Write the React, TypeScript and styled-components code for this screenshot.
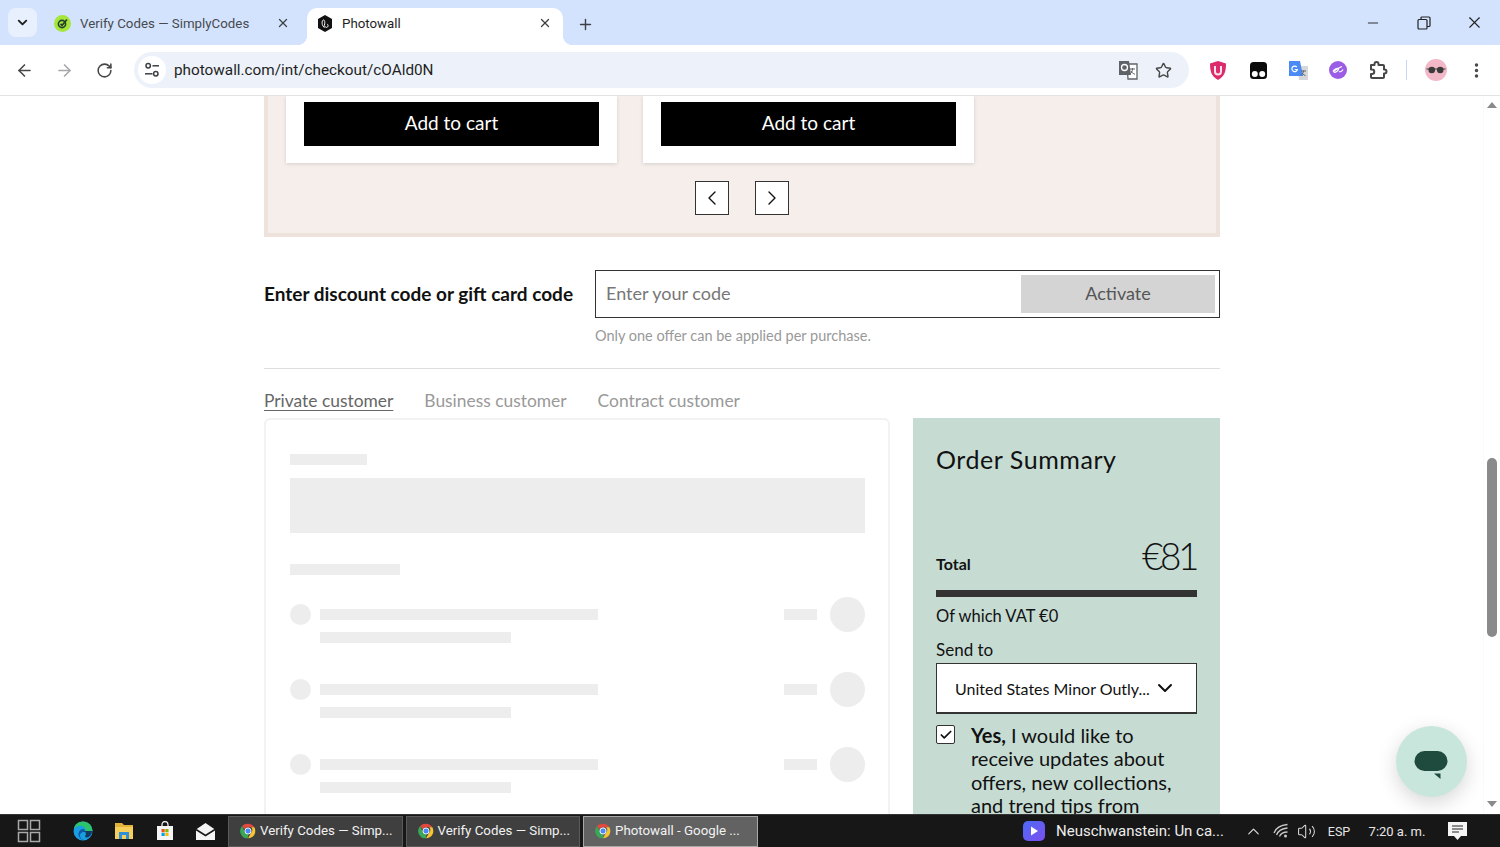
import React from "react";
import styled, { createGlobalStyle } from "styled-components";
import {
  ArrowLeft,
  ArrowRight,
  Check,
  ChevronDown,
  ChevronLeft,
  ChevronRight,
  ChevronUp,
  EllipsisVertical,
  Minus,
  Plus,
  RotateCw,
  Star,
  Volume2,
  X,
} from "lucide-react";

const GlobalStyle = createGlobalStyle`
  html, body {
    margin: 0;
    padding: 0;
    height: 100%;
    overflow: hidden;
    background: #fff;
  }
  * {
    box-sizing: border-box;
  }
`;

const pageFont = `"Lato", "Open Sans", sans-serif`;
const chromeFont = `"Roboto", "Liberation Sans", sans-serif`;

function ChromeLogo({ size = 16 }: { size?: number }) {
  return (
    <svg width={size} height={size} viewBox="0 0 24 24">
      <path d="M12 1a11 11 0 0 1 9.5 5.5H12a5.5 5.5 0 0 0-5 3.2L3.2 4.6A11 11 0 0 1 12 1z" fill="#e2483d" />
      <path d="M21.5 6.5A11 11 0 0 1 12 23l4.7-8.2a5.5 5.5 0 0 0 0-8.3z" fill="#f7c531" />
      <path d="M12 23A11 11 0 0 1 3.2 4.6L7.8 14.8a5.5 5.5 0 0 0 4.6 2.7z" fill="#3aa757" />
      <circle cx="12" cy="12" r="4.6" fill="#4a8af4" stroke="#fff" strokeWidth="1.4" />
    </svg>
  );
}

function SimplyCodesIcon() {
  return (
    <svg width="17" height="17" viewBox="0 0 17 17">
      <circle cx="8.5" cy="8.5" r="8.5" fill="#a4e639" />
      <circle cx="8" cy="9" r="3.6" fill="none" stroke="#24402a" strokeWidth="1.6" />
      <path d="M6.5 9l1.6 1.4L13 4.5" fill="none" stroke="#24402a" strokeWidth="1.7" />
    </svg>
  );
}

function PhotowallIcon() {
  return (
    <svg width="16" height="17" viewBox="0 0 16 17">
      <path d="M8 0l7 4v9l-7 4-7-4V4z" fill="#111" />
      <path
        d="M7 12c-2.2-1-2.6-6.500-.6-7 1.800-.4 1.800 4.500.4 6.500-.4.800.9 1.100 1.400.1.200 1.200 2.400 1.100 2.800-.4.300-1.200-.4-2-.9-2"
        fill="none"
        stroke="#fff"
        strokeWidth="1"
      />
    </svg>
  );
}

function TuneIcon() {
  return (
    <svg width="16" height="16" viewBox="0 0 16 16" fill="none" stroke="#3c4043" strokeWidth="1.5">
      <circle cx="4.2" cy="3.8" r="2.2" />
      <path d="M8.500 3.800H15" />
      <circle cx="11.800" cy="11.800" r="2.200" />
      <path d="M1 11.800h7.500" />
    </svg>
  );
}

function TranslatePageIcon() {
  return (
    <svg width="20" height="20" viewBox="0 0 20 20">
      <path d="M9 4h10v15H10z" fill="#fff" stroke="#5f6368" strokeWidth="1.300" />
      <path d="M1 1h10l2 14H1z" fill="#5f6368" />
      <circle cx="6.500" cy="7.500" r="3" fill="none" stroke="#fff" strokeWidth="1.300" />
      <path d="M12 9h5M14.500 8v1c0 2-1 4-2.500 5M13 11c.8 1.500 2.400 2.800 4 3.300" fill="none" stroke="#5f6368" strokeWidth="1" />
    </svg>
  );
}

function ShieldIcon() {
  return (
    <svg width="16" height="19" viewBox="0 0 16 19">
      <path d="M8 0l8 2.500c0 8-1.500 13-8 16.500C1.500 15.500 0 10.500 0 2.500z" fill="#dc2a6c" />
      <path d="M5 5v5.500a3 3 0 0 0 6 0V5" fill="none" stroke="#fbe3ec" strokeWidth="2" />
    </svg>
  );
}

function TamperIcon() {
  return (
    <svg width="17" height="17" viewBox="0 0 17 17">
      <rect width="17" height="17" rx="3.500" fill="#0b0b0b" />
      <circle cx="4.800" cy="12" r="3" fill="#fff" />
      <circle cx="12.200" cy="12" r="3" fill="#fff" />
    </svg>
  );
}

function GoogleTranslateIcon() {
  return (
    <svg width="19" height="19" viewBox="0 0 19 19">
      <path d="M8 5h11v14H10z" fill="#d5d7da" />
      <path d="M0 0h11l3 15H0z" fill="#4a8af4" />
      <path d="M7.800 6a2.800 2.800 0 1 0 .6 2.500H5.600" fill="none" stroke="#fff" strokeWidth="1.200" />
      <path d="M12 10h5M14.500 9.500c0 2-1 3.800-2.500 5M13 12c.8 1.200 2 2.200 3.500 2.700" fill="none" stroke="#5f6368" strokeWidth="1" />
    </svg>
  );
}

function PurpleIcon() {
  return (
    <svg width="18" height="18" viewBox="0 0 18 18">
      <circle cx="9" cy="9" r="9" fill="#9b5de5" />
      <path d="M4 10.500c1-2.500 5-4 5.500-2.500s-3.500 4-4.500 3 3-3 8-5.500M10 10.500c1 .5 3 0 4-2" fill="none" stroke="#fff" strokeWidth="1.300" />
    </svg>
  );
}

function ExtensionsIcon() {
  return (
    <svg width="20" height="20" viewBox="0 0 20 20" fill="none" stroke="#474747" strokeWidth="2" strokeLinejoin="round">
      <path d="M3 5h3.500V4a2 2 0 0 1 4 0v1H15a1 1 0 0 1 1 1v3.500h.5a2 2 0 0 1 0 4H16V17a1 1 0 0 1-1 1H4a1 1 0 0 1-1-1v-3h1a2.200 2.200 0 0 0 0-4.500H3z" />
    </svg>
  );
}

function AvatarIcon() {
  return (
    <svg width="22" height="22" viewBox="0 0 22 22">
      <circle cx="11" cy="11" r="11" fill="#f3b8c8" />
      <circle cx="6.800" cy="11" r="3.300" fill="#3b3b3b" />
      <circle cx="15.200" cy="11" r="3.300" fill="#3b3b3b" />
      <path d="M1.500 10h19" stroke="#3b3b3b" strokeWidth="1" />
    </svg>
  );
}

function RestoreIcon() {
  return (
    <svg width="14" height="14" viewBox="0 0 14 14" fill="none" stroke="#222" strokeWidth="1.200">
      <rect x="1" y="3.500" width="9" height="9.500" rx="1" />
      <path d="M4 3.500V2a1 1 0 0 1 1-1h7a1 1 0 0 1 1 1v7.500a1 1 0 0 1-1 1h-2" />
    </svg>
  );
}

function StartIcon() {
  return (
    <svg width="24" height="24" viewBox="0 0 24 24" fill="none" stroke="#a9a9a9" strokeWidth="1.500">
      <rect x="1.500" y="1.500" width="9" height="9" />
      <rect x="13.500" y="1.500" width="9" height="9" />
      <rect x="1.500" y="13.500" width="9" height="9" />
      <rect x="13.500" y="13.500" width="9" height="9" />
    </svg>
  );
}

function EdgeIcon() {
  return (
    <svg width="20" height="20" viewBox="0 0 20 20">
      <circle cx="10" cy="10" r="9.500" fill="#1b9de2" />
      <path d="M19.500 10c0-5-4-9.500-9.500-9.500C5 .5 1.500 4 .8 8c2-3 8-4.500 10.700-1.500 1 1 1.200 2.500.3 3.500h7.700z" fill="#2dc36a" />
      <path d="M12 11c-3-.5-5 1-5 3.500s2.500 5 6 5c-4 .5-8-3-7.500-7 .500-4 5-6 6.500-3.500z" fill="#0c59a4" />
      <path d="M11.800 10H19c0 3-2 6-5 6.500-2 .3-2.500-1-1.500-2 .7-1 .3-3-.7-4.500z" fill="#0f2f57" opacity=".9" />
    </svg>
  );
}

function FolderIcon() {
  return (
    <svg width="20" height="18" viewBox="0 0 20 18">
      <path d="M1 1h7l2 2h9v4H1z" fill="#e3b23c" />
      <rect x="1" y="5" width="18" height="12" fill="#f6cf5b" />
      <rect x="5" y="10" width="10" height="7" fill="#2f8fd8" />
      <rect x="8" y="13" width="4" height="4" fill="#f6cf5b" />
    </svg>
  );
}

function StoreIcon() {
  return (
    <svg width="18" height="20" viewBox="0 0 18 20">
      <path d="M6 5V3.500a3 3 0 0 1 6 0V5" fill="none" stroke="#eee" strokeWidth="1.300" />
      <rect x="1" y="5" width="16" height="14" fill="#f5f5f5" />
      <rect x="5.500" y="8" width="3.200" height="3.200" fill="#f25022" />
      <rect x="9.300" y="8" width="3.200" height="3.200" fill="#7fba00" />
      <rect x="5.500" y="11.800" width="3.200" height="3.200" fill="#00a4ef" />
      <rect x="9.300" y="11.800" width="3.200" height="3.200" fill="#ffb900" />
    </svg>
  );
}

function MailIcon() {
  return (
    <svg width="19" height="17" viewBox="0 0 19 17">
      <path d="M0 6.500L9.500 0 19 6.500V17H0z" fill="#f5f5f5" />
      <path d="M0 6.500l9.500 6 9.500-6" fill="none" stroke="#1a1a1a" strokeWidth="1.600" />
    </svg>
  );
}

function PlayerIcon() {
  return (
    <svg width="22" height="20" viewBox="0 0 22 20">
      <defs>
        <linearGradient id="playerBg" x1="0" y1="0" x2="1" y2="1">
          <stop offset="0" stopColor="#4b6bf5" />
          <stop offset="1" stopColor="#7d4ff0" />
        </linearGradient>
      </defs>
      <rect width="22" height="20" rx="5" fill="url(#playerBg)" />
      <path d="M8 5.500l7 4.500-7 4.500z" fill="#fff" />
    </svg>
  );
}

function WifiIcon() {
  return (
    <svg width="16" height="16" viewBox="0 0 16 16" fill="none" stroke="#c9c9c9" strokeWidth="1.300">
      <path d="M1 10C3 4.500 8 2 14.500 1.500M3.500 12C5 8 9 5.500 14.500 5M6.500 13.500c1-2.500 4-4.500 8-4.500" />
      <circle cx="12.500" cy="13" r="1.500" fill="#c9c9c9" stroke="none" />
    </svg>
  );
}

function NotificationIcon() {
  return (
    <svg width="19" height="18" viewBox="0 0 19 18">
      <path d="M0 0h19v14h-6l-3.500 4L6 14H0z" fill="#f5f5f5" />
      <path d="M4 4h11M4 7h11M4 10h7" stroke="#222" strokeWidth="1.200" />
    </svg>
  );
}

function ChatBubble() {
  return (
    <svg width="34" height="28" viewBox="0 0 34 28">
      <rect x="0.500" width="33" height="20" rx="10" fill="#1f4a3e" />
      <path d="M20 22.500h6.500v5.500z" fill="#1f4a3e" />
    </svg>
  );
}

const tabs = [
  { title: "Verify Codes — SimplyCodes", icon: <SimplyCodesIcon />, active: false },
  { title: "Photowall", icon: <PhotowallIcon />, active: true },
];

const taskButtons = [
  { title: "Verify Codes — Simp...", active: false },
  { title: "Verify Codes — Simp...", active: false },
  { title: "Photowall - Google ...", active: true },
];

const skeletonRows = [0, 1, 2];

export default function App() {
  return (
    <Window>
      <GlobalStyle />
      <TabStrip>
        <TabSearch>
          <ChevronDown size={15} strokeWidth={3} color="#1f1f1f" />
        </TabSearch>
        {tabs.map(tab => (
          <Tab key={tab.title} $active={tab.active}>
            {tab.icon}
            <TabTitle $active={tab.active}>{tab.title}</TabTitle>
            <TabClose $active={tab.active}>
              <X size={14} strokeWidth={2.2} color="#3c4043" />
            </TabClose>
          </Tab>
        ))}
        <NewTab>
          <Plus size={17} strokeWidth={2} color="#3c4043" />
        </NewTab>
        <WindowControls>
          <WindowButton>
            <Minus size={16} strokeWidth={1.4} color="#222" />
          </WindowButton>
          <WindowButton>
            <RestoreIcon />
          </WindowButton>
          <WindowButton>
            <X size={19} strokeWidth={1.4} color="#222" />
          </WindowButton>
        </WindowControls>
      </TabStrip>

      <Toolbar>
        <NavSlot>
          <ArrowLeft size={19} strokeWidth={2} color="#474747" />
        </NavSlot>
        <NavSlot>
          <ArrowRight size={19} strokeWidth={2} color="#a5a7aa" />
        </NavSlot>
        <NavSlot>
          <RotateCw size={17} strokeWidth={2.2} color="#474747" />
        </NavSlot>
        <Omnibox>
          <SiteInfo>
            <TuneIcon />
          </SiteInfo>
          <Url>photowall.com/int/checkout/cOAld0N</Url>
          <OmniActions>
            <TranslatePageIcon />
            <Star size={17} strokeWidth={2} color="#474747" />
          </OmniActions>
        </Omnibox>
        <Extensions>
          <NavSlot>
            <ShieldIcon />
          </NavSlot>
          <NavSlot>
            <TamperIcon />
          </NavSlot>
          <NavSlot>
            <GoogleTranslateIcon />
          </NavSlot>
          <NavSlot>
            <PurpleIcon />
          </NavSlot>
          <NavSlot>
            <ExtensionsIcon />
          </NavSlot>
        </Extensions>
        <ToolbarDivider />
        <AvatarSlot>
          <AvatarIcon />
        </AvatarSlot>
        <NavSlot>
          <EllipsisVertical size={19} strokeWidth={2.4} color="#474747" />
        </NavSlot>
      </Toolbar>

      <Viewport>
        <Page>
          <OffersPanel>
            <OfferCards>
              <OfferCard>
                <CartButton>Add to cart</CartButton>
              </OfferCard>
              <OfferCard>
                <CartButton>Add to cart</CartButton>
              </OfferCard>
            </OfferCards>
            <Pager>
              <PagerButton>
                <ChevronLeft size={24} strokeWidth={1.4} color="#111" />
              </PagerButton>
              <PagerButton>
                <ChevronRight size={24} strokeWidth={1.4} color="#111" />
              </PagerButton>
            </Pager>
          </OffersPanel>

          <DiscountRow>
            <DiscountLabel>Enter discount code or gift card code</DiscountLabel>
            <DiscountBox>
              <DiscountPlaceholder>Enter your code</DiscountPlaceholder>
              <ActivateButton>Activate</ActivateButton>
            </DiscountBox>
          </DiscountRow>
          <DiscountHint>Only one offer can be applied per purchase.</DiscountHint>
          <Divider />

          <CustomerTabs>
            <CustomerTab $active>Private customer</CustomerTab>
            <CustomerTab>Business customer</CustomerTab>
            <CustomerTab>Contract customer</CustomerTab>
          </CustomerTabs>

          <Columns>
            <SkeletonCard>
              <SkeletonBar $width={77} />
              <SkeletonBlock />
              <SkeletonHeading />
              {skeletonRows.map(row => (
                <SkeletonRow key={row}>
                  <SkeletonDot />
                  <SkeletonLines>
                    <SkeletonBar $width={278} />
                    <SkeletonBar $width={191} />
                  </SkeletonLines>
                  <SkeletonPrice />
                  <SkeletonAvatar />
                </SkeletonRow>
              ))}
            </SkeletonCard>

            <Summary>
              <SummaryTitle>Order Summary</SummaryTitle>
              <TotalRow>
                <TotalLabel>Total</TotalLabel>
                <TotalPrice>€81</TotalPrice>
              </TotalRow>
              <TotalRule />
              <VatLine>Of which VAT €0</VatLine>
              <SendLabel>Send to</SendLabel>
              <CountrySelect>
                <CountryName>United States Minor Outly...</CountryName>
                <ChevronDown size={24} strokeWidth={2} color="#111" />
              </CountrySelect>
              <ConsentRow>
                <ConsentBox>
                  <Check size={14} strokeWidth={3} color="#111" />
                </ConsentBox>
                <ConsentText>
                  <strong>Yes,</strong> I would like to
                  <br />
                  receive updates about
                  <br />
                  offers, new collections,
                  <br />
                  and trend tips from
                </ConsentText>
              </ConsentRow>
            </Summary>
          </Columns>
        </Page>
        <ScrollTrack>
          <ScrollArrow $up />
          <ScrollThumb />
          <ScrollArrow />
        </ScrollTrack>
        <ChatButton>
          <ChatBubble />
        </ChatButton>
      </Viewport>

      <Taskbar>
        <TaskSlot $width={57}>
          <StartIcon />
        </TaskSlot>
        <TaskIcons>
          <TaskSlot $width={41}>
            <EdgeIcon />
          </TaskSlot>
          <TaskSlot $width={41}>
            <FolderIcon />
          </TaskSlot>
          <TaskSlot $width={41}>
            <StoreIcon />
          </TaskSlot>
          <TaskSlot $width={41}>
            <MailIcon />
          </TaskSlot>
        </TaskIcons>
        <TaskButtons>
          {taskButtons.map((button, index) => (
            <TaskButton key={index} $active={button.active}>
              <ChromeLogo />
              <span>{button.title}</span>
            </TaskButton>
          ))}
        </TaskButtons>
        <Tray>
          <PlayerIcon />
          <MediaTitle>Neuschwanstein: Un ca...</MediaTitle>
          <TaskSlot $width={27}>
            <ChevronUp size={19} strokeWidth={1.5} color="#ddd" />
          </TaskSlot>
          <TaskSlot $width={28}>
            <WifiIcon />
          </TaskSlot>
          <TaskSlot $width={22}>
            <Volume2 size={19} strokeWidth={1.3} color="#ddd" />
          </TaskSlot>
          <TrayLanguage>ESP</TrayLanguage>
          <TrayClock>7:20 a. m.</TrayClock>
          <TaskSlot $width={40}>
            <NotificationIcon />
          </TaskSlot>
        </Tray>
      </Taskbar>
    </Window>
  );
}

const Window = styled.div`
  width: 1500px;
  height: 847px;
  display: flex;
  flex-direction: column;
  overflow: hidden;
  background: #fff;
`;

const TabStrip = styled.div`
  height: 45px;
  flex: none;
  display: flex;
  align-items: flex-end;
  padding-left: 8px;
  background: #d3e3fd;
  font-family: ${chromeFont};
`;

const TabSearch = styled.div`
  width: 29px;
  height: 29px;
  margin-bottom: 8px;
  margin-right: 8px;
  border-radius: 8px;
  background: #e8f0fe;
  display: flex;
  align-items: center;
  justify-content: center;
`;

interface ActiveProps {
  readonly $active?: boolean;
}

const Tab = styled.div<ActiveProps>`
  position: relative;
  width: ${({ $active }) => ($active ? 256 : 262)}px;
  height: 37px;
  display: flex;
  align-items: center;
  padding-left: ${({ $active }) => ($active ? 10 : 9)}px;
  padding-bottom: 7px;
  gap: 9px;
  border-radius: 10px 10px 0 0;
  background: ${({ $active }) => ($active ? "#fff" : "transparent")};

  ${({ $active }) =>
    $active &&
    `
    &::before, &::after {
      content: "";
      position: absolute;
      bottom: 0;
      width: 10px;
      height: 10px;
    }
    &::before {
      left: -10px;
      background: radial-gradient(circle at 0 0, transparent 10px, #fff 10.5px);
    }
    &::after {
      right: -10px;
      background: radial-gradient(circle at 100% 0, transparent 10px, #fff 10.5px);
    }
  `}
`;

const TabTitle = styled.span<ActiveProps>`
  font-size: 13.300px;
  white-space: nowrap;
  color: ${({ $active }) => ($active ? "#1f1f1f" : "#474a4f")};
`;

const TabClose = styled.div<ActiveProps>`
  position: absolute;
  right: ${({ $active }) => ($active ? 11 : 17)}px;
  top: 8px;
  display: flex;
`;

const NewTab = styled.div`
  width: 44px;
  height: 37px;
  padding-bottom: 4px;
  display: flex;
  align-items: center;
  justify-content: center;
`;

const WindowControls = styled.div`
  margin-left: auto;
  display: flex;
  height: 45px;
`;

const WindowButton = styled.div`
  width: 51px;
  height: 45px;
  display: flex;
  align-items: center;
  justify-content: center;
`;

const Toolbar = styled.div`
  height: 51px;
  flex: none;
  display: flex;
  align-items: center;
  padding-left: 4px;
  background: #fff;
  border-bottom: 1px solid #e3e3e3;
  border-radius: 10px 10px 0 0;
  font-family: ${chromeFont};
`;

const NavSlot = styled.div`
  width: 40px;
  height: 36px;
  flex: none;
  display: flex;
  align-items: center;
  justify-content: center;
`;

const Omnibox = styled.div`
  width: 1055px;
  height: 36px;
  margin-left: 10px;
  flex: none;
  display: flex;
  align-items: center;
  padding-left: 4px;
  padding-right: 17px;
  border-radius: 18px;
  background: #edf2fa;
`;

const SiteInfo = styled.div`
  width: 28px;
  height: 28px;
  border-radius: 50%;
  background: #fff;
  display: flex;
  align-items: center;
  justify-content: center;
`;

const Url = styled.div`
  margin-left: 8px;
  font-size: 15.300px;
  color: #1f1f1f;
  white-space: nowrap;
`;

const OmniActions = styled.div`
  margin-left: auto;
  display: flex;
  align-items: center;
  gap: 17px;
`;

const Extensions = styled.div`
  display: flex;
  margin-left: 9px;
`;

const ToolbarDivider = styled.div`
  width: 1px;
  height: 20px;
  margin-left: 8px;
  background: #c7d7f0;
`;

const AvatarSlot = styled(NavSlot)`
  margin-left: 9px;
`;

const Viewport = styled.div`
  position: relative;
  flex: 1;
  min-height: 0;
  display: flex;
  overflow: hidden;
  background: #fff;
`;

const Page = styled.main`
  flex: 1;
  min-width: 0;
  padding-left: 264px;
  font-family: ${pageFont};
  color: #111;
`;

const OffersPanel = styled.section`
  width: 956px;
  height: 141px;
  background: #f5eeeb;
  border: 4px solid #eee3dc;
  border-top: none;
`;

const OfferCards = styled.div`
  display: flex;
  gap: 26px;
  padding-left: 18px;
`;

const OfferCard = styled.div`
  width: 331px;
  height: 67px;
  padding: 6px 18px 0;
  background: #fff;
  box-shadow: 0 1px 4px rgba(0, 0, 0, 0.13);
`;

const CartButton = styled.div`
  height: 44px;
  padding-bottom: 3px;
  display: flex;
  align-items: center;
  justify-content: center;
  background: #000;
  color: #fff;
  font-size: 19px;
`;

const Pager = styled.div`
  display: flex;
  justify-content: center;
  gap: 26px;
  margin-top: 18px;
`;

const PagerButton = styled.div`
  width: 34px;
  height: 34px;
  display: flex;
  align-items: center;
  justify-content: center;
  background: #fff;
  border: 1px solid #333;
`;

const DiscountRow = styled.div`
  display: flex;
  align-items: center;
  width: 956px;
  height: 48px;
  margin-top: 33px;
`;

const DiscountLabel = styled.label`
  width: 331px;
  flex: none;
  padding-bottom: 2px;
  font-size: 19px;
  font-weight: 700;
  color: #111;
  white-space: nowrap;
`;

const DiscountBox = styled.div`
  flex: 1;
  height: 48px;
  display: flex;
  align-items: center;
  justify-content: space-between;
  padding: 0 4px 0 10px;
  border: 1px solid #333;
`;

const DiscountPlaceholder = styled.span`
  padding-bottom: 2px;
  font-size: 18px;
  color: #777;
`;

const ActivateButton = styled.div`
  width: 194px;
  height: 38px;
  padding-bottom: 2px;
  display: flex;
  align-items: center;
  justify-content: center;
  background: #d4d4d4;
  color: #555;
  font-size: 18px;
`;

const DiscountHint = styled.p`
  margin: 8px 0 0 331px;
  height: 20px;
  line-height: 20px;
  font-size: 14.500px;
  color: #999;
`;

const Divider = styled.hr`
  width: 956px;
  height: 1px;
  margin: 22px 0 0;
  border: none;
  background: #dedede;
`;

const CustomerTabs = styled.nav`
  display: flex;
  gap: 31px;
  height: 22px;
  line-height: 22px;
  margin-top: 21px;
  margin-bottom: 6px;
`;

const CustomerTab = styled.span<ActiveProps>`
  font-size: 17.400px;
  color: ${({ $active }) => ($active ? "#666" : "#999")};
  text-decoration: ${({ $active }) => ($active ? "underline" : "none")};
  text-underline-offset: 3px;
`;

const Columns = styled.div`
  display: flex;
  gap: 23px;
  width: 956px;
  align-items: flex-start;
`;

const SkeletonCard = styled.div`
  width: 626px;
  height: 500px;
  flex: none;
  padding: 34px 23px 0 24px;
  border: 2px solid #f2f2f2;
  border-radius: 6px;
`;

interface SkeletonBarProps {
  readonly $width: number;
}
const SkeletonBar = styled.div<SkeletonBarProps>`
  width: ${({ $width }) => $width}px;
  height: 11px;
  background: #ededed;
`;

const SkeletonBlock = styled.div`
  height: 55px;
  margin-top: 13px;
  background: #ededed;
`;

const SkeletonHeading = styled(SkeletonBar).attrs({ $width: 110 })`
  margin-top: 31px;
  margin-bottom: 22px;
`;

const SkeletonRow = styled.div`
  display: flex;
  align-items: flex-start;
  height: 46px;
  margin-bottom: 29px;
`;

const SkeletonDot = styled.div`
  width: 21px;
  height: 21px;
  margin-top: 7px;
  margin-right: 9px;
  border-radius: 50%;
  background: #ededed;
`;

const SkeletonLines = styled.div`
  display: flex;
  flex-direction: column;
  gap: 12px;
  padding-top: 12px;
`;

const SkeletonPrice = styled.div`
  width: 33px;
  height: 11px;
  margin-top: 12px;
  margin-left: auto;
  background: #ededed;
`;

const SkeletonAvatar = styled.div`
  width: 35px;
  height: 35px;
  margin-left: 13px;
  border-radius: 50%;
  background: #ededed;
`;

const Summary = styled.aside`
  width: 307px;
  height: 500px;
  flex: none;
  padding: 26px 23px 0;
  background: #c6dcd3;
  color: #111;
`;

const SummaryTitle = styled.h2`
  margin: 0;
  height: 30px;
  line-height: 30px;
  font-size: 25px;
  font-weight: 400;
  letter-spacing: 0.55px;
  white-space: nowrap;
`;

const TotalRow = styled.div`
  display: flex;
  justify-content: space-between;
  align-items: baseline;
  height: 46px;
  margin-top: 60px;
  padding-right: 1px;
`;

const TotalLabel = styled.span`
  padding-bottom: 1px;
  font-size: 16px;
  font-weight: 700;
`;

const TotalPrice = styled.span`
  font-size: 37px;
  line-height: 44px;
  font-weight: 300;
  letter-spacing: -3.500px;
`;

const TotalRule = styled.div`
  height: 7px;
  margin-top: 10px;
  background: #333;
`;

const VatLine = styled.div`
  height: 22px;
  line-height: 22px;
  margin-top: 8px;
  font-size: 16.500px;
`;

const SendLabel = styled.div`
  height: 22px;
  line-height: 22px;
  margin-top: 12px;
  font-size: 17px;
`;

const CountrySelect = styled.div`
  height: 51px;
  margin-top: 2px;
  display: flex;
  align-items: center;
  justify-content: space-between;
  padding: 0 19px 0 18px;
  background: #fff;
  border: 1px solid #333;
  border-bottom-width: 2px;
`;

const CountryName = styled.span`
  font-size: 16px;
  white-space: nowrap;
`;

const ConsentRow = styled.div`
  display: flex;
  margin-top: 11px;
`;

const ConsentBox = styled.div`
  width: 19px;
  height: 19px;
  flex: none;
  margin-right: 16px;
  display: flex;
  align-items: center;
  justify-content: center;
  background: #fff;
  border: 1px solid #333;
  border-radius: 2px;
`;

const ConsentText = styled.p`
  margin: -1px 0 0;
  font-size: 20px;
  line-height: 23.300px;
  white-space: nowrap;
`;

const ScrollTrack = styled.div`
  width: 17px;
  flex: none;
  display: flex;
  flex-direction: column;
  align-items: center;
  padding-top: 6px;
  background: #fff;
  border-left: 1px solid #fafafa;
`;

interface ScrollArrowProps {
  readonly $up?: boolean;
}
const ScrollArrow = styled.div<ScrollArrowProps>`
  width: 0;
  height: 0;
  flex: none;
  border-left: 5px solid transparent;
  border-right: 5px solid transparent;
  ${({ $up }) =>
    $up
      ? "border-bottom: 6px solid #8a8a8a; margin-bottom: 350px;"
      : "border-top: 6px solid #8a8a8a; margin-top: 164px;"}
`;

const ScrollThumb = styled.div`
  width: 10px;
  height: 179px;
  flex: none;
  border-radius: 5px;
  background: #8a8a8a;
`;

const ChatButton = styled.div`
  position: absolute;
  left: 1396px;
  top: 630px;
  width: 71px;
  height: 71px;
  padding-top: 6px;
  padding-right: 2px;
  display: flex;
  align-items: center;
  justify-content: center;
  border-radius: 50%;
  background: #c9e6dc;
  box-shadow: 0 6px 20px rgba(0, 0, 0, 0.16);
`;

const Taskbar = styled.footer`
  height: 33px;
  flex: none;
  display: flex;
  align-items: center;
  background: #171717;
  border-top: 1px solid #333;
  font-family: ${chromeFont};
`;

interface TaskSlotProps {
  readonly $width: number;
}
const TaskSlot = styled.div<TaskSlotProps>`
  width: ${({ $width }) => $width}px;
  height: 32px;
  flex: none;
  display: flex;
  align-items: center;
  justify-content: center;
`;

const TaskIcons = styled.div`
  display: flex;
  margin-left: 5px;
`;

const TaskButtons = styled.div`
  display: flex;
  gap: 3px;
  margin-left: 2px;
`;

const TaskButton = styled.div<ActiveProps>`
  width: 174.500px;
  height: 31px;
  display: flex;
  align-items: center;
  gap: 4px;
  padding-left: 11px;
  padding-bottom: 1px;
  font-size: 13.300px;
  white-space: nowrap;
  color: #f2f2f2;
  background: ${({ $active }) => ($active ? "#626262" : "#3f3f3f")};
  border: 1px solid ${({ $active }) => ($active ? "#a8a8a8" : "#5a5a5a")};
`;

const Tray = styled.div`
  margin-left: auto;
  display: flex;
  align-items: center;
  padding-right: 23px;
`;

const MediaTitle = styled.span`
  width: 184px;
  margin-left: 11px;
  font-size: 15px;
  color: #eee;
  white-space: nowrap;
`;

const TrayLanguage = styled.span`
  width: 44px;
  font-size: 12.500px;
  text-align: center;
  color: #e6e6e6;
`;

const TrayClock = styled.span`
  width: 76px;
  padding-right: 4px;
  font-size: 13px;
  text-align: center;
  color: #e6e6e6;
  white-space: nowrap;
`;
